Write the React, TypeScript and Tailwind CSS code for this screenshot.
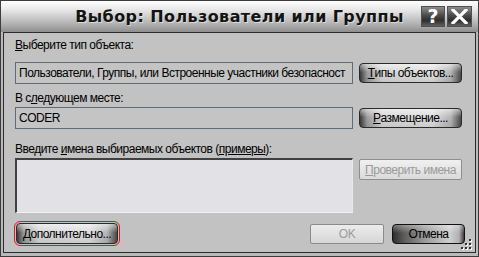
import React from 'react'

const ui = "font-['Liberation_Sans',Arial,sans-serif] text-[12px] tracking-[-0.5px] leading-[14px] text-black"

const glossy =
  'whitespace-nowrap rounded-[4px] border border-[#2a2a2a] bg-[linear-gradient(to_bottom,rgba(255,255,255,0.55),rgba(255,255,255,0)_45%,rgba(0,0,0,0.08)),linear-gradient(to_right,#3a3a3a,#9c9c9c_7%,#d6d6d6_22%,#dedede_72%,#b4b4b4_90%,#4a4a4a)]'

function Field({ children }: { children?: React.ReactNode }) {
  return (
    <div className="h-[22px] border border-[#5d6c7a] bg-[#c4c4c4] pl-[3px] flex items-center whitespace-nowrap overflow-hidden">
      {children}
    </div>
  )
}

function GripDots() {
  const dots = [
    [8, 0],
    [4, 4],
    [8, 4],
    [0, 8],
    [4, 8],
    [8, 8],
  ]
  return (
    <svg width="11" height="11" className="absolute right-[3px] bottom-[2px]">
      {dots.map(([x, y], i) => (
        <g key={i}>
          <rect x={x + 1} y={y + 1} width="2" height="2" fill="#ffffff" />
          <rect x={x} y={y} width="2" height="2" fill="#333333" />
        </g>
      ))}
    </svg>
  )
}

export default function App() {
  return (
    <div className={`w-[479px] h-[257px] border border-[#3c3c3c] bg-[#b9b9b9] flex flex-col ${ui}`}>
      {/* title bar */}
      <div className="h-[31px] shrink-0 relative flex items-center justify-center bg-[linear-gradient(to_bottom,#ffffff,#e6e6e6_30%,#b0b0b0_75%,#8e8e8e)]">
        <span className="font-['DejaVu_Sans',sans-serif] font-bold text-[16px] tracking-[0.4px] text-[#141414] [text-shadow:1px_1px_0_rgba(255,255,255,0.5)]">
          Выбор: Пользователи или Группы
        </span>
        <div className="absolute right-[6px] top-[5px] flex gap-[2px]">
          <div className="w-[24px] h-[21px] border border-[#505050] bg-[linear-gradient(to_bottom,#8c8c8c,#4a4a4a_45%,#2e2e2e_70%,#5e5e5e)] flex items-center justify-center font-['DejaVu_Sans',sans-serif] font-bold text-[19px] leading-none tracking-normal text-white">
            ?
          </div>
          <div className="w-[25px] h-[21px] border border-[#505050] bg-[linear-gradient(to_bottom,#8c8c8c,#4a4a4a_45%,#2e2e2e_70%,#5e5e5e)] flex items-center justify-center">
            <svg width="17" height="15" viewBox="0 0 17 15">
              <path d="M2 1 L15 14 M15 1 L2 14" stroke="#ffffff" strokeWidth="3.2" strokeLinecap="square" />
            </svg>
          </div>
        </div>
      </div>

      {/* client area */}
      <div className="flex-1 mx-[2px] mb-[3px] border border-[#2c2c2c] bg-[#c2c2c2] relative pl-[11px] pr-[10px] pt-[5px]">
        <div>
          <span className="underline">В</span>ыберите тип объекта:
        </div>
        <div className="mt-[10px] grid grid-cols-[338px_103px] gap-x-[6px] items-center">
          <Field>Пользователи, Группы, или Встроенные участники безопасност</Field>
          <button className={`h-[20px] ${glossy} flex items-center justify-center`}>
            <span className="underline">Т</span>ипы объектов...
          </button>
        </div>

        <div className="mt-[7px]">
          В с<span className="underline">л</span>едующем месте:
        </div>
        <div className="mt-[2px] grid grid-cols-[338px_103px] gap-x-[6px] items-center">
          <Field>CODER</Field>
          <button className={`h-[20px] ${glossy} flex items-center justify-center`}>
            <span className="underline">Р</span>азмещение...
          </button>
        </div>

        <div className="mt-[13px]">
          Введите <span className="underline">и</span>мена выбираемых объектов (<span className="underline">примеры</span>):
        </div>
        <div className="mt-[2px] grid grid-cols-[338px_103px] gap-x-[6px] items-start">
          <div className="h-[55px] border-t-2 border-l-2 border-r border-b border-t-[#404040] border-l-[#404040] border-r-[#e8e8e8] border-b-[#f2f2f2] bg-[#e1e1e6]" />
          <button className="mt-[1px] h-[21px] whitespace-nowrap rounded-[2px] border border-[#8e8e8e] bg-[linear-gradient(to_bottom,#f0f0f0,#dadada)] text-[#9a9a9a] flex items-center justify-center">
            <span className="underline">П</span>роверить имена
          </button>
        </div>

        <div className="mt-[8px] flex items-center">
          <div className="rounded-[6px] border border-[#e01818] p-[1px] -ml-[1px]">
            <button className={`w-[102px] h-[21px] ${glossy} flex items-center justify-center`}>
              <span className="underline">Д</span>ополнительно...
            </button>
          </div>
          <div className="ml-auto flex gap-[8px]">
            <button className="w-[74px] h-[20px] rounded-[2px] border border-[#8a8a8a] bg-[linear-gradient(to_bottom,#ececec,#d6d6d6)] text-[#9c9c9c] flex items-center justify-center">
              OK
            </button>
            <button className="w-[73px] h-[20px] rounded-[4px] border border-[#111111] bg-[linear-gradient(to_bottom,rgba(255,255,255,0.35),rgba(255,255,255,0)_45%),linear-gradient(to_right,#2e2e2e,#5a5a5a_15%,#9a9a9a_45%,#cfcfcf_80%,#b0b0b0_93%,#3a3a3a)] flex items-center justify-center">
              Отмена
            </button>
          </div>
        </div>
        <GripDots />
      </div>
    </div>
  )
}
